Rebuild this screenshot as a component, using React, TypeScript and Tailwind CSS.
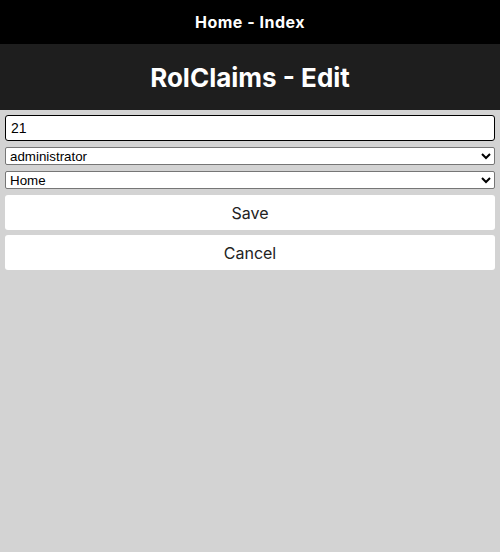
export default function App() {
  const heading = { fontFamily: "Inter, 'Noto Sans', sans-serif" };
  const arial = { fontFamily: "Arial, 'Liberation Sans', sans-serif" };

  return (
    <div className="min-h-[552px] bg-[#d3d3d3]" style={heading}>
      <div className="flex h-[44px] items-center justify-center bg-black">
        <h1 className="text-[16px] font-bold tracking-[0.5px] text-white">Home - Index</h1>
      </div>
      <div className="flex h-[66px] items-center justify-center bg-[#1e1e1e]">
        <h2 className="text-[26px] font-bold text-white">RolClaims - Edit</h2>
      </div>

      <form className="flex flex-col px-[5px] pt-[5px]">
        <input
          type="text"
          defaultValue="21"
          className="h-[26px] w-full rounded-[3px] border border-black bg-white px-[5px] text-[14px] text-black"
          style={arial}
        />
        <select
          defaultValue="administrator"
          className="mt-[6px] h-[18px] w-full rounded-[2px] border border-[#767676] bg-white text-[13.33px] text-black"
          style={arial}
        >
          <option value="administrator">administrator</option>
          <option value="user">user</option>
        </select>
        <select
          defaultValue="Home"
          className="mt-[6px] h-[18px] w-full rounded-[2px] border border-[#767676] bg-white text-[13.33px] text-black"
          style={arial}
        >
          <option value="Home">Home</option>
          <option value="RolClaims">RolClaims</option>
        </select>
        <button
          type="button"
          className="mt-[6px] h-[35px] w-full rounded-[3px] bg-white text-[16px] text-[#222]"
        >
          Save
        </button>
        <button
          type="button"
          className="mt-[5px] h-[35px] w-full rounded-[3px] bg-white text-[16px] text-[#222]"
        >
          Cancel
        </button>
      </form>
    </div>
  );
}
